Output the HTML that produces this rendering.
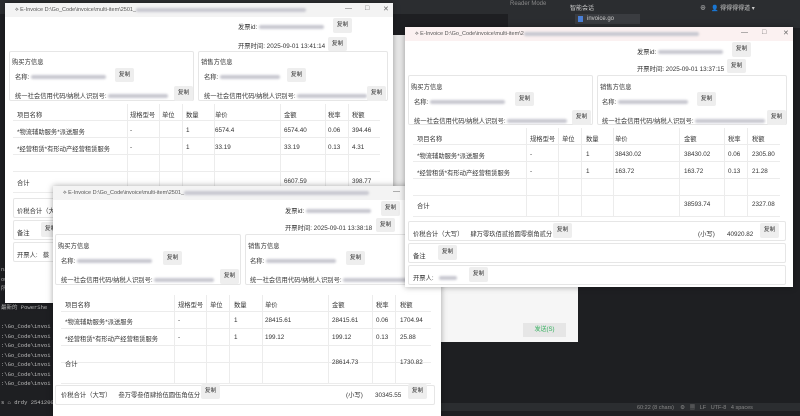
<!DOCTYPE html>
<html><head><meta charset="utf-8"><style>
*{margin:0;padding:0;box-sizing:border-box}
body{width:800px;height:411px;overflow:hidden;background:#1e1f22;position:relative;font-family:"Liberation Sans","Noto Sans CJK SC",sans-serif;font-size:6.3px;color:#333}
.a{position:absolute;white-space:nowrap}
.win{position:absolute;width:388px;height:258px;background:#fff;box-shadow:0 0 6px rgba(0,0,0,.35);overflow:hidden}
.tb{position:absolute;left:0;top:0;right:0;height:14px;background:#f3f3f3;font-size:5.5px;color:#555}
.tb span{position:absolute;left:10px;top:4px}
.tb i{position:absolute;top:2px;font-style:normal;font-size:7px;color:#666}
.blur{display:inline-block;height:4px;background:#c8c8d0;filter:blur(1px);border-radius:2px;vertical-align:middle}
.btn{position:absolute;background:#eee;font-size:5.8px;text-align:center;color:#333;border-radius:2px}
.box{position:absolute;border:1px solid #e6e6e6;border-radius:2px}
.hl{position:absolute;height:1px;background:#ececec}
.vl{position:absolute;width:1px;background:#ececec}
</style></head><body>

<div class="a" style="left:0;top:0;width:800px;height:14px;background:#2b2d30"></div>
<div class="a" style="left:508px;top:0;width:292px;height:28px;background:#2b2d30"></div>
<div class="a" style="left:510px;top:1px;color:#888;font-size:6px">Reader Mode</div>
<div class="a" style="left:570px;top:3px;color:#ccc;font-size:6px">智能会话</div>
<div class="a" style="left:700px;top:3px;color:#ccc;font-size:6px">⊕ &nbsp; 👤 得得得得道 ▾</div>
<div class="a" style="left:575px;top:14px;width:65px;height:10px;background:#3a3c40;color:#ccc;font-size:6px;padding-left:12px;line-height:10px">invoice.go</div>
<div class="a" style="left:578px;top:16px;width:5px;height:6px;background:#4a7fd6"></div>
<div class="a" style="left:393px;top:35px;width:12px;height:255px;background:#e9e9e9"></div>
<div class="a" style="left:0;top:262px;width:55px;height:149px;background:#1e1f22;font-family:'Liberation Mono',monospace;font-size:5.5px;color:#bbb;line-height:9.5px;padding:3px 0 0 1px">
nal &nbsp;Local ×<br>ows PowerShell<br>所有 (C) Micro<br><br>最新的 PowerShe<br><br>:\Go_Code\invoi<br>:\Go_Code\invoi<br>:\Go_Code\invoi<br>:\Go_Code\invoi<br>:\Go_Code\invoi<br>:\Go_Code\invoi<br>:\Go_Code\invoi<br><br>s ⌂ drdy 2541200</div>
<div class="a" style="left:440px;top:286px;width:138px;height:56px;background:#f6f6f6"></div>
<div class="a" style="left:523px;top:323px;width:43px;height:14px;background:#e6e6e6;color:#2fae5a;font-size:6px;text-align:center;line-height:14px">发送(S)</div>
<div class="a" style="left:440px;top:403px;width:360px;height:8px;background:#2b2d30;color:#888;font-size:5.5px;padding-left:197px">60:22 (8 chars) &nbsp;&nbsp; ⚙ &nbsp; ▦ &nbsp; LF &nbsp; UTF-8 &nbsp; 4 spaces</div>

<!-- Window 1 -->
<div class="win" style="left:5px;top:3px;height:300px">
 <div class="tb"><span>⟡ E-Invoice D:\Go_Code\invoice\multi-item\2501_<b class="blur" style="width:170px"></b></span><i style="left:340px">—</i><i style="left:360px">□</i><i style="left:378px">✕</i></div>
 <div class="a" style="left:233px;top:19px">发票id: <b class="blur" style="width:65px"></b></div><div class="btn" style="left:328px;top:15px;width:19px;height:15px;line-height:15px">复制</div>
 <div class="a" style="left:233px;top:38px">开票时间: 2025-09-01 13:41:14</div><div class="btn" style="left:323px;top:34px;width:19px;height:14px;line-height:14px">复制</div>
 <div class="box" style="left:4px;top:48px;width:185px;height:50px"></div><div class="box" style="left:193px;top:48px;width:190px;height:50px"></div>
 <div class="a" style="left:7px;top:54px">购买方信息</div><div class="a" style="left:196px;top:54px">销售方信息</div>
 <div class="a" style="left:10px;top:69px">名称: <b class="blur" style="width:75px"></b></div><div class="btn" style="left:110px;top:65px;width:19px;height:14px;line-height:14px">复制</div>
 <div class="a" style="left:199px;top:69px">名称: <b class="blur" style="width:60px"></b></div><div class="btn" style="left:282px;top:65px;width:19px;height:14px;line-height:14px">复制</div>
 <div class="a" style="left:10px;top:88px">统一社会信用代码/纳税人识别号: <b class="blur" style="width:60px"></b></div><div class="btn" style="left:169px;top:83px;width:19px;height:15px;line-height:15px">复制</div>
 <div class="a" style="left:199px;top:88px">统一社会信用代码/纳税人识别号: <b class="blur" style="width:70px"></b></div><div class="btn" style="left:362px;top:83px;width:19px;height:15px;line-height:15px">复制</div>
 <div class="hl" style="left:8px;top:117px;width:367px"></div><div class="hl" style="left:8px;top:134px;width:367px"></div><div class="hl" style="left:8px;top:151px;width:367px"></div><div class="hl" style="left:8px;top:168px;width:367px"></div><div class="hl" style="left:8px;top:189px;width:367px"></div>
 <div class="vl" style="left:122px;top:101px;height:88px"></div><div class="vl" style="left:154px;top:101px;height:88px"></div><div class="vl" style="left:177px;top:101px;height:88px"></div><div class="vl" style="left:209px;top:101px;height:88px"></div><div class="vl" style="left:275px;top:101px;height:88px"></div><div class="vl" style="left:320px;top:101px;height:88px"></div><div class="vl" style="left:343px;top:101px;height:88px"></div>
 <div class="a" style="left:12px;top:107px">项目名称</div><div class="a" style="left:125px;top:107px">规格型号</div><div class="a" style="left:157px;top:107px">单位</div><div class="a" style="left:181px;top:107px">数量</div><div class="a" style="left:210px;top:107px">单价</div><div class="a" style="left:279px;top:107px">金额</div><div class="a" style="left:323px;top:107px">税率</div><div class="a" style="left:347px;top:107px">税额</div>
 <div class="a" style="left:12px;top:124px">*物流辅助服务*派送服务</div><div class="a" style="left:125px;top:124px">-</div><div class="a" style="left:181px;top:124px">1</div><div class="a" style="left:210px;top:124px">6574.4</div><div class="a" style="left:279px;top:124px">6574.40</div><div class="a" style="left:323px;top:124px">0.06</div><div class="a" style="left:347px;top:124px">394.46</div>
 <div class="a" style="left:12px;top:141px">*经营租赁*有形动产经营租赁服务</div><div class="a" style="left:125px;top:141px">-</div><div class="a" style="left:181px;top:141px">1</div><div class="a" style="left:210px;top:141px">33.19</div><div class="a" style="left:279px;top:141px">33.19</div><div class="a" style="left:323px;top:141px">0.13</div><div class="a" style="left:347px;top:141px">4.31</div>
 <div class="a" style="left:12px;top:175px">合计</div><div class="a" style="left:279px;top:175px">6607.59</div><div class="a" style="left:347px;top:175px">398.77</div>
 <div class="box" style="left:8px;top:195px;width:372px;height:20px"></div><div class="a" style="left:12px;top:203px">价税合计（大写）</div>
 <div class="box" style="left:8px;top:217px;width:372px;height:20px"></div><div class="a" style="left:12px;top:225px">备注</div><div class="btn" style="left:36px;top:219px;width:19px;height:15px;line-height:15px">复制</div>
 <div class="box" style="left:8px;top:239px;width:372px;height:20px"></div><div class="a" style="left:12px;top:247px">开票人: &nbsp; 蔡</div>
</div>

<!-- Window 3 -->
<div class="win" style="left:53px;top:186px;width:388px;height:230px">
 <div class="tb"><span>⟡ E-Invoice D:\Go_Code\invoice\multi-item\2501_<b class="blur" style="width:185px"></b></span><i style="left:340px">—</i><i style="left:360px">□</i><i style="left:378px">✕</i></div>
 <div class="a" style="left:232px;top:20px">发票id: <b class="blur" style="width:65px"></b></div><div class="btn" style="left:328px;top:15px;width:19px;height:15px;line-height:15px">复制</div>
 <div class="a" style="left:232px;top:37px">开票时间: 2025-09-01 13:38:18</div><div class="btn" style="left:323px;top:32px;width:19px;height:14px;line-height:14px">复制</div>
 <div class="box" style="left:2px;top:48px;width:186px;height:51px"></div><div class="box" style="left:192px;top:48px;width:194px;height:51px"></div>
 <div class="a" style="left:5px;top:55px">购买方信息</div><div class="a" style="left:195px;top:55px">销售方信息</div>
 <div class="a" style="left:8px;top:70px">名称: <b class="blur" style="width:75px"></b></div><div class="btn" style="left:110px;top:65px;width:19px;height:14px;line-height:14px">复制</div>
 <div class="a" style="left:197px;top:70px">名称: <b class="blur" style="width:70px"></b></div><div class="btn" style="left:293px;top:65px;width:19px;height:14px;line-height:14px">复制</div>
 <div class="a" style="left:8px;top:89px">统一社会信用代码/纳税人识别号: <b class="blur" style="width:60px"></b></div><div class="btn" style="left:167px;top:83px;width:19px;height:15px;line-height:15px">复制</div>
 <div class="a" style="left:197px;top:89px">统一社会信用代码/纳税人识别号: <b class="blur" style="width:70px"></b></div>
 <div class="hl" style="left:8px;top:125px;width:370px"></div><div class="hl" style="left:8px;top:142px;width:370px"></div><div class="hl" style="left:8px;top:159px;width:370px"></div><div class="hl" style="left:8px;top:176px;width:370px"></div><div class="hl" style="left:8px;top:197px;width:370px"></div>
 <div class="vl" style="left:121px;top:109px;height:88px"></div><div class="vl" style="left:153px;top:109px;height:88px"></div><div class="vl" style="left:176px;top:109px;height:88px"></div><div class="vl" style="left:209px;top:109px;height:88px"></div><div class="vl" style="left:275px;top:109px;height:88px"></div><div class="vl" style="left:319px;top:109px;height:88px"></div><div class="vl" style="left:342px;top:109px;height:88px"></div>
 <div class="a" style="left:12px;top:114px">项目名称</div><div class="a" style="left:125px;top:114px">规格型号</div><div class="a" style="left:157px;top:114px">单位</div><div class="a" style="left:181px;top:114px">数量</div><div class="a" style="left:212px;top:114px">单价</div><div class="a" style="left:279px;top:114px">金额</div><div class="a" style="left:323px;top:114px">税率</div><div class="a" style="left:347px;top:114px">税额</div>
 <div class="a" style="left:12px;top:131px">*物流辅助服务*派送服务</div><div class="a" style="left:125px;top:131px">-</div><div class="a" style="left:181px;top:131px">1</div><div class="a" style="left:212px;top:131px">28415.61</div><div class="a" style="left:279px;top:131px">28415.61</div><div class="a" style="left:323px;top:131px">0.06</div><div class="a" style="left:347px;top:131px">1704.94</div>
 <div class="a" style="left:12px;top:148px">*经营租赁*有形动产经营租赁服务</div><div class="a" style="left:125px;top:148px">-</div><div class="a" style="left:181px;top:148px">1</div><div class="a" style="left:212px;top:148px">199.12</div><div class="a" style="left:279px;top:148px">199.12</div><div class="a" style="left:323px;top:148px">0.13</div><div class="a" style="left:347px;top:148px">25.88</div>
 <div class="a" style="left:12px;top:173px">合计</div><div class="a" style="left:279px;top:173px">28614.73</div><div class="a" style="left:347px;top:173px">1730.82</div>
 <div class="box" style="left:2px;top:199px;width:380px;height:20px"></div><div class="a" style="left:8px;top:204px">价税合计（大写） &nbsp;&nbsp; 叁万零叁佰肆拾伍圆伍角伍分</div><div class="btn" style="left:148px;top:198px;width:19px;height:15px;line-height:15px">复制</div>
 <div class="a" style="left:293px;top:204px">(小写) &nbsp;&nbsp;&nbsp;&nbsp;&nbsp; 30345.55</div><div class="btn" style="left:355px;top:198px;width:19px;height:15px;line-height:15px">复制</div>
</div>

<!-- Window 2 (top) -->
<div class="win" style="left:405px;top:27px;height:260px">
 <div class="tb" style="background:#fbf1f1"><span>⟡ E-Invoice D:\Go_Code\invoice\multi-item\2<b class="blur" style="width:175px"></b></span><i style="left:336px">—</i><i style="left:357px">□</i><i style="left:378px">✕</i></div>
 <div class="a" style="left:232px;top:20px">发票id: <b class="blur" style="width:65px"></b></div><div class="btn" style="left:327px;top:15px;width:19px;height:15px;line-height:15px">复制</div>
 <div class="a" style="left:232px;top:37px">开票时间: 2025-09-01 13:37:15</div><div class="btn" style="left:322px;top:32px;width:19px;height:14px;line-height:14px">复制</div>
 <div class="box" style="left:3px;top:48px;width:185px;height:50px"></div><div class="box" style="left:192px;top:48px;width:190px;height:50px"></div>
 <div class="a" style="left:6px;top:55px">购买方信息</div><div class="a" style="left:195px;top:55px">销售方信息</div>
 <div class="a" style="left:9px;top:70px">名称: <b class="blur" style="width:75px"></b></div><div class="btn" style="left:110px;top:65px;width:19px;height:14px;line-height:14px">复制</div>
 <div class="a" style="left:197px;top:70px">名称: <b class="blur" style="width:70px"></b></div><div class="btn" style="left:292px;top:65px;width:19px;height:14px;line-height:14px">复制</div>
 <div class="a" style="left:9px;top:89px">统一社会信用代码/纳税人识别号: <b class="blur" style="width:60px"></b></div><div class="btn" style="left:167px;top:83px;width:19px;height:15px;line-height:15px">复制</div>
 <div class="a" style="left:197px;top:89px">统一社会信用代码/纳税人识别号: <b class="blur" style="width:70px"></b></div><div class="btn" style="left:362px;top:83px;width:19px;height:15px;line-height:15px">复制</div>
 <div class="hl" style="left:8px;top:117px;width:367px"></div><div class="hl" style="left:8px;top:134px;width:367px"></div><div class="hl" style="left:8px;top:151px;width:367px"></div><div class="hl" style="left:8px;top:168px;width:367px"></div><div class="hl" style="left:8px;top:189px;width:367px"></div>
 <div class="vl" style="left:121px;top:101px;height:88px"></div><div class="vl" style="left:153px;top:101px;height:88px"></div><div class="vl" style="left:176px;top:101px;height:88px"></div><div class="vl" style="left:208px;top:101px;height:88px"></div><div class="vl" style="left:274px;top:101px;height:88px"></div><div class="vl" style="left:319px;top:101px;height:88px"></div><div class="vl" style="left:342px;top:101px;height:88px"></div>
 <div class="a" style="left:12px;top:107px">项目名称</div><div class="a" style="left:125px;top:107px">规格型号</div><div class="a" style="left:157px;top:107px">单位</div><div class="a" style="left:181px;top:107px">数量</div><div class="a" style="left:210px;top:107px">单价</div><div class="a" style="left:279px;top:107px">金额</div><div class="a" style="left:323px;top:107px">税率</div><div class="a" style="left:347px;top:107px">税额</div>
 <div class="a" style="left:12px;top:124px">*物流辅助服务*派送服务</div><div class="a" style="left:125px;top:124px">-</div><div class="a" style="left:181px;top:124px">1</div><div class="a" style="left:210px;top:124px">38430.02</div><div class="a" style="left:279px;top:124px">38430.02</div><div class="a" style="left:323px;top:124px">0.06</div><div class="a" style="left:347px;top:124px">2305.80</div>
 <div class="a" style="left:12px;top:141px">*经营租赁*有形动产经营租赁服务</div><div class="a" style="left:125px;top:141px">-</div><div class="a" style="left:181px;top:141px">1</div><div class="a" style="left:210px;top:141px">163.72</div><div class="a" style="left:279px;top:141px">163.72</div><div class="a" style="left:323px;top:141px">0.13</div><div class="a" style="left:347px;top:141px">21.28</div>
 <div class="a" style="left:12px;top:174px">合计</div><div class="a" style="left:279px;top:174px">38593.74</div><div class="a" style="left:347px;top:174px">2327.08</div>
 <div class="box" style="left:3px;top:194px;width:378px;height:20px"></div><div class="a" style="left:8px;top:202px">价税合计（大写） &nbsp;&nbsp; 肆万零玖佰贰拾圆零捌角贰分</div><div class="btn" style="left:148px;top:196px;width:19px;height:15px;line-height:15px">复制</div>
 <div class="a" style="left:293px;top:202px">(小写) &nbsp;&nbsp;&nbsp;&nbsp;&nbsp; 40920.82</div><div class="btn" style="left:355px;top:196px;width:19px;height:15px;line-height:15px">复制</div>
 <div class="box" style="left:3px;top:216px;width:378px;height:20px"></div><div class="a" style="left:8px;top:224px">备注</div><div class="btn" style="left:33px;top:218px;width:19px;height:15px;line-height:15px">复制</div>
 <div class="box" style="left:3px;top:238px;width:378px;height:20px"></div><div class="a" style="left:8px;top:246px">开票人: &nbsp; <b class="blur" style="width:18px"></b></div><div class="btn" style="left:64px;top:240px;width:19px;height:15px;line-height:15px">复制</div>
</div>
</body></html>
